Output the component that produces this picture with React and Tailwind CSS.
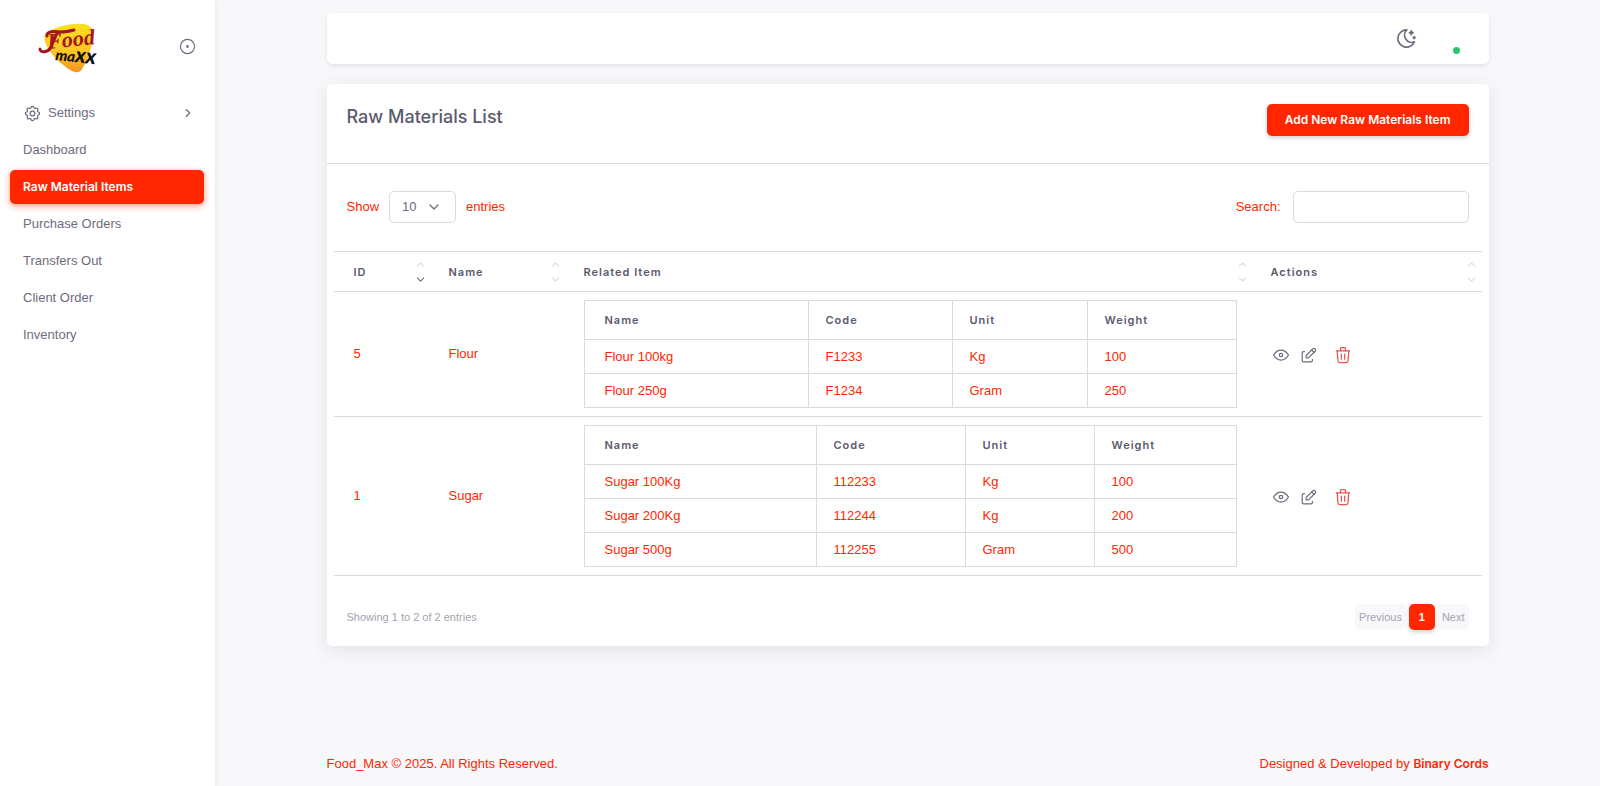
import { useState } from "react";
import {
  TbChevronDown,
  TbChevronRight,
  TbChevronUp,
  TbCircleDot,
  TbEdit,
  TbEye,
  TbMoonStars,
  TbSettings,
  TbTrash,
} from "react-icons/tb";

const NAV_ITEMS = [
  "Dashboard",
  "Raw Material Items",
  "Purchase Orders",
  "Transfers Out",
  "Client Order",
  "Inventory",
];

const COLUMNS = [
  { label: "ID", width: "w-[101px]", pad: "pl-5 pr-2", sorted: true },
  { label: "Name", width: "w-[135px]", pad: "pl-3.5 pr-2" },
  { label: "Related Item", width: "", pad: "pl-3.5 pr-2" },
  { label: "Actions", width: "w-[225px]", pad: "pl-3.5 pr-1" },
];

const MATERIALS = [
  {
    id: 5,
    name: "Flour",
    widths: ["", "w-[144px]", "w-[135px]", "w-[149px]"],
    items: [
      ["Flour 100kg", "F1233", "Kg", "100"],
      ["Flour 250g", "F1234", "Gram", "250"],
    ],
  },
  {
    id: 1,
    name: "Sugar",
    widths: ["", "w-[149px]", "w-[129px]", "w-[142px]"],
    items: [
      ["Sugar 100Kg", "112233", "Kg", "100"],
      ["Sugar 200Kg", "112244", "Kg", "200"],
      ["Sugar 500g", "112255", "Gram", "500"],
    ],
  },
];

const Logo = () => (
  <svg width="66" height="52" viewBox="0 0 66 52" role="img" aria-label="Food Maxx">
    <defs>
      <linearGradient id="pick" x1="0" y1="0" x2="0" y2="1">
        <stop offset="0" stopColor="#f9e11b" />
        <stop offset="0.6" stopColor="#fdc425" />
        <stop offset="1" stopColor="#f6921e" />
      </linearGradient>
    </defs>
    <path
      d="M8 11C17 5 32 1 45 2c8 1 11 5 10 12-1 11-5 24-11 33-2 4-6 4-10 2C22 42 11 31 7 20c-1-4-1-7 1-9Z"
      fill="url(#pick)"
    />
    <path
      d="M2 27c0 4 8 4 11-2 2-5 4-9 6-14M9 14c-1-5 8-5 14-4 5 0 9-1 13-2"
      fill="none"
      stroke="#a3151f"
      strokeWidth="3"
      strokeLinecap="round"
    />
    <g fontStyle="italic">
      <text
        x="10"
        y="27"
        fontSize="22"
        fontWeight="700"
        fill="#a3151f"
        fontFamily="Liberation Serif, serif"
        transform="rotate(-6 10 27)"
      >
        Food
      </text>
      <text
        x="17"
        y="38"
        fontSize="15"
        fontWeight="900"
        fill="#111"
        fontFamily="Lato, sans-serif"
        transform="rotate(6 17 38)"
      >
        ma
        <tspan fontSize="21">xx</tspan>
      </text>
    </g>
  </svg>
);

const Sidebar = () => (
  <aside className="w-[215px] shrink-0 bg-white shadow-[0_2px_6px_rgba(75,70,92,0.12)]">
    <div className="flex items-start justify-between pt-[22px] pr-[18px] pl-[38px]">
      <a href="#home">
        <Logo />
      </a>
      <button type="button" aria-label="Toggle menu" className="mt-[15px]">
        <TbCircleDot size={19} strokeWidth={1.5} />
      </button>
    </div>
    <nav className="mt-[22px] flex flex-col gap-[3px] pr-[11px] pl-2.5">
      <a href="#settings" className="flex h-[34px] items-center px-[13px]">
        <TbSettings size={19} strokeWidth={1.5} />
        <span className="ml-1.5">Settings</span>
        <TbChevronRight size={14} strokeWidth={2} className="-mr-1 ml-auto" />
      </a>
      {NAV_ITEMS.map((item) => (
        <a
          key={item}
          href={`#${item.toLowerCase().replaceAll(" ", "-")}`}
          className={
            item === "Raw Material Items"
              ? "flex h-[34px] items-center rounded-[5px] bg-[#ff2600] px-[13px] font-['Inter',sans-serif] text-xs font-semibold text-white shadow-[0_2px_6px_rgba(255,38,0,0.48)]"
              : "flex h-[34px] items-center px-[13px]"
          }
        >
          {item}
        </a>
      ))}
    </nav>
  </aside>
);

const SortArrows = ({ sorted }) => (
  <span className="flex flex-col gap-0.5">
    <TbChevronUp size={13} className="text-[#dbdade]" />
    <TbChevronDown size={13} className={sorted ? "text-[#6f6b7d]" : "text-[#dbdade]"} />
  </span>
);

const RelatedItems = ({ items, widths }) => (
  <table className="w-full table-fixed border-collapse">
    <thead>
      <tr className="h-[39px] text-left font-['Inter',sans-serif] text-[11px] tracking-[1px] text-[#5d596c]">
        {["Name", "Code", "Unit", "Weight"].map((label, i) => (
          <th
            key={label}
            className={`border border-[#dbdade] font-semibold ${widths[i]} ${i === 0 ? "pl-5" : "pl-[17px]"}`}
          >
            {label}
          </th>
        ))}
      </tr>
    </thead>
    <tbody>
      {items.map((row) => (
        <tr key={row[0]} className="h-[34px]">
          {row.map((cell, i) => (
            <td key={i} className={`border border-[#dbdade] ${i === 0 ? "pl-5" : "pl-[17px]"}`}>
              {cell}
            </td>
          ))}
        </tr>
      ))}
    </tbody>
  </table>
);

const RowActions = () => (
  <div className="flex items-center pt-0.5 text-[#6f6b7d]">
    <button type="button" aria-label="View">
      <TbEye size={20} strokeWidth={1.5} />
    </button>
    <button type="button" aria-label="Edit" className="ml-2">
      <TbEdit size={19} strokeWidth={1.5} />
    </button>
    <button type="button" aria-label="Delete" className="ml-[15px] text-[#ea5455]">
      <TbTrash size={20} strokeWidth={1.5} />
    </button>
  </div>
);

const App = () => {
  const [pageSize, setPageSize] = useState("10");
  const [search, setSearch] = useState("");

  return (
    <div className="flex min-h-screen bg-[#f8f7fa] font-['Liberation_Sans',sans-serif] text-[13px] leading-5 text-[#6f6b7d]">
      <Sidebar />
      <div className="mx-auto flex max-w-[1206px] min-w-0 flex-1 flex-col px-[22px] pt-[13px]">
        <header className="flex h-[51px] items-center justify-end rounded-[5px] bg-white pr-[29px] shadow-[0_2px_4px_rgba(75,70,92,0.12)]">
          <button type="button" aria-label="Switch theme">
            <TbMoonStars size={23} strokeWidth={1.75} />
          </button>
          <button type="button" aria-label="Account" className="ml-2 flex h-[34px] w-[34px] items-end justify-end">
            <span className="mb-0.5 h-[7px] w-[7px] rounded-full bg-[#28c76f]" />
          </button>
        </header>

        <main className="mt-5 rounded-[5px] bg-white shadow-[0_4px_18px_rgba(75,70,92,0.12)]">
          <div className="flex items-start justify-between border-b border-[#dbdade] px-5 pt-5 pb-[27px] font-['Inter',sans-serif]">
            <h1 className="text-lg leading-[26px] font-medium text-[#5d596c]">Raw Materials List</h1>
            <button
              type="button"
              className="h-8 rounded-[5px] bg-[#ff2600] px-[18px] text-xs font-semibold text-white shadow-[0_2px_4px_rgba(75,70,92,0.25)]"
            >
              Add New Raw Materials Item
            </button>
          </div>

          <div className="flex items-center justify-between px-5 pt-[27px] pb-7 text-[#ff2600]">
            <label className="flex items-center gap-2.5">
              Show
              <span className="relative flex items-center text-[#6f6b7d]">
                <select
                  value={pageSize}
                  onChange={(e) => setPageSize(e.target.value)}
                  className="h-8 w-[67px] appearance-none rounded-[5px] border border-[#dbdade] bg-white pl-3"
                >
                  <option>10</option>
                  <option>25</option>
                  <option>50</option>
                  <option>100</option>
                </select>
                <TbChevronDown size={16} className="pointer-events-none absolute right-3.5" />
              </span>
              entries
            </label>
            <label className="flex items-center gap-3">
              Search:
              <input
                type="search"
                value={search}
                onChange={(e) => setSearch(e.target.value)}
                className="h-8 w-44 rounded-[5px] border border-[#dbdade] bg-white px-3"
              />
            </label>
          </div>

          <div className="px-[7px]">
            <table className="w-full table-fixed border-collapse border-y border-[#dbdade] text-[#ff2600]">
              <thead>
                <tr className="h-10 text-left font-['Inter',sans-serif] text-[11px] tracking-[1px] text-[#5d596c]">
                  {COLUMNS.map((col) => (
                    <th key={col.label} className={`font-semibold ${col.width} ${col.pad}`}>
                      <div className="flex items-center justify-between">
                        {col.label}
                        <SortArrows sorted={col.sorted} />
                      </div>
                    </th>
                  ))}
                </tr>
              </thead>
              <tbody>
                {MATERIALS.map((material) => (
                  <tr key={material.id} className="border-t border-[#dbdade]">
                    <td className="pl-5">{material.id}</td>
                    <td className="pl-3.5">{material.name}</td>
                    <td className="py-2 pr-5 pl-3.5">
                      <RelatedItems items={material.items} widths={material.widths} />
                    </td>
                    <td className="pl-3.5">
                      <RowActions />
                    </td>
                  </tr>
                ))}
              </tbody>
            </table>
          </div>

          <div className="flex items-center justify-between px-5 pt-7 pb-4 text-[11px] text-[#a5a3ae]">
            <p>Showing 1 to 2 of 2 entries</p>
            <div className="flex gap-[3px]">
              <button type="button" className="h-[26px] rounded-[5px] bg-[#f8f7fa] px-1">
                Previous
              </button>
              <button
                type="button"
                className="h-[26px] w-[26px] rounded-[5px] bg-[#ff2600] font-semibold text-white shadow-[0_2px_4px_rgba(75,70,92,0.25)]"
              >
                1
              </button>
              <button type="button" className="h-[26px] rounded-[5px] bg-[#f8f7fa] px-1">
                Next
              </button>
            </div>
          </div>
        </main>

        <footer className="mt-auto flex items-center justify-between pt-6 pb-3 text-[#ff2600]">
          <p>Food_Max © 2025. All Rights Reserved.</p>
          <p>
            Designed &amp; Developed by{" "}
            <a href="#binary-cords" className="font-['Inter',sans-serif] text-xs font-semibold">
              Binary Cords
            </a>
          </p>
        </footer>
      </div>
    </div>
  );
};

export default App;
